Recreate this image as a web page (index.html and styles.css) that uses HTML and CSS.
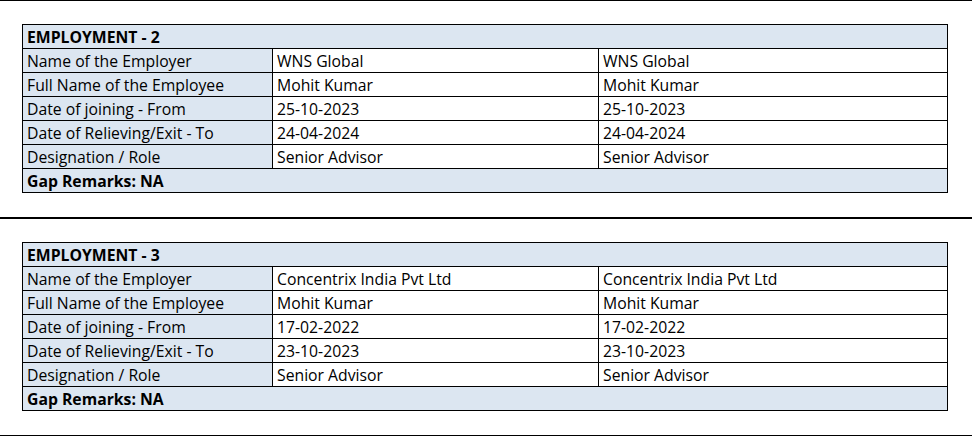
FILE: index.html
```html
<!DOCTYPE html>
<html>
<head>
<meta charset="utf-8">
<link rel="stylesheet" href="styles.css">
</head>
<body>
<div class="page">
  <hr class="rule rule-thin">
  <div class="block">
    <table class="emp">
      <colgroup><col class="c1"><col class="c2"><col class="c3"></colgroup>
      <tr class="shade"><td colspan="3" class="bold">EMPLOYMENT - 2</td></tr>
      <tr><td class="label">Name of the Employer</td><td>WNS Global</td><td>WNS Global</td></tr>
      <tr><td class="label">Full Name of the Employee</td><td>Mohit Kumar</td><td>Mohit Kumar</td></tr>
      <tr><td class="label">Date of joining - From</td><td>25-10-2023</td><td>25-10-2023</td></tr>
      <tr><td class="label">Date of Relieving/Exit - To</td><td>24-04-2024</td><td>24-04-2024</td></tr>
      <tr><td class="label">Designation / Role</td><td>Senior Advisor</td><td>Senior Advisor</td></tr>
      <tr class="shade"><td colspan="3" class="bold">Gap Remarks: NA</td></tr>
    </table>
  </div>
  <hr class="rule rule-thick">
  <div class="block">
    <table class="emp">
      <colgroup><col class="c1"><col class="c2"><col class="c3"></colgroup>
      <tr class="shade"><td colspan="3" class="bold">EMPLOYMENT - 3</td></tr>
      <tr><td class="label">Name of the Employer</td><td>Concentrix India Pvt Ltd</td><td>Concentrix India Pvt Ltd</td></tr>
      <tr><td class="label">Full Name of the Employee</td><td>Mohit Kumar</td><td>Mohit Kumar</td></tr>
      <tr><td class="label">Date of joining - From</td><td>17-02-2022</td><td>17-02-2022</td></tr>
      <tr><td class="label">Date of Relieving/Exit - To</td><td>23-10-2023</td><td>23-10-2023</td></tr>
      <tr><td class="label">Designation / Role</td><td>Senior Advisor</td><td>Senior Advisor</td></tr>
      <tr class="shade"><td colspan="3" class="bold">Gap Remarks: NA</td></tr>
    </table>
  </div>
  <hr class="rule rule-thin">
</div>
</body>
</html>
```
FILE: styles.css
```css
html, body {
  margin: 0;
  padding: 0;
  background: #ffffff;
}
.page {
  font-family: "Open Sans", "Liberation Sans", sans-serif;
  font-size: 15.75px;
  color: #000000;
}
.rule {
  margin: 0;
  border: none;
  background: #000000;
}
.rule-thin { height: 1px; }
.rule-thick { height: 2px; }
.block {
  padding: 23px 0 24px 22px;
}
.emp {
  border-collapse: collapse;
  table-layout: fixed;
  width: 925px;
}
.c1 { width: 250px; }
.c2 { width: 326px; }
.c3 { width: 349px; }
.emp td {
  border: 1px solid #000000;
  height: 23px;
  padding: 1px 4px 0 4px;
  line-height: 22px;
  white-space: nowrap;
  overflow: hidden;
  box-sizing: border-box;
  vertical-align: middle;
}
.emp tr { height: 24px; }
.shade td, .emp td.label {
  background: #dce6f1;
}
.bold {
  font-weight: 700;
}
```
